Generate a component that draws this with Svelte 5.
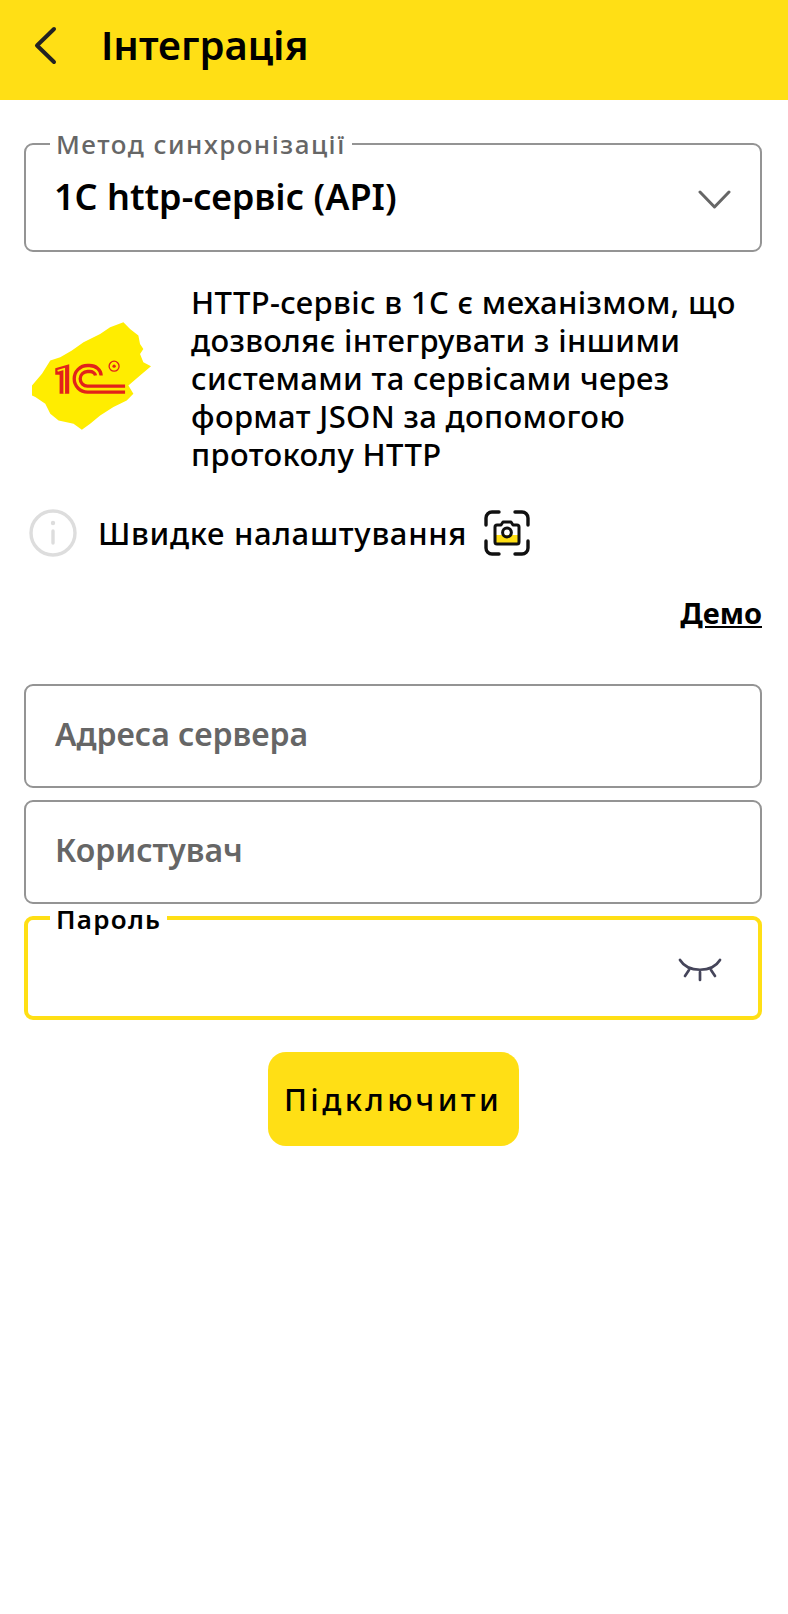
<script>
	const description = [
		'HTTP-сервіс в 1С є механізмом, що',
		'дозволяє інтегрувати з іншими',
		'системами та сервісами через',
		'формат JSON за допомогою',
		'протоколу HTTP'
	];
	const blob = 'M95 320 L125 285 L150 245 L180 235 L215 215 L250 190 L300 165 L330 145 L370 130 L390 150 L415 170 L420 195 L430 210 L420 225 L430 250 L453 262 L420 290 L385 320 L400 345 L380 365 L340 385 L300 410 L270 435 L245 453 L220 435 L175 425 L150 405 L135 375 L105 355 L95 350 Z';
</script>

<div class="page">
	<header class="topbar">
		<svg class="back" width="25" height="39" viewBox="0 0 25 39" fill="none">
			<path d="M21 3 L4 19.5 L21 36" stroke="#222" stroke-width="4" stroke-linecap="round" stroke-linejoin="round" />
		</svg>
		<h1>Інтеграція</h1>
	</header>

	<main class="content">
		<div class="field select">
			<span class="legend">Метод синхронізації</span>
			<span class="value">1C http-сервіс (API)</span>
			<svg class="chevron" width="33" height="20" viewBox="0 0 33 20" fill="none">
				<path d="M2 2 L16.5 17 L31 2" stroke="#666" stroke-width="3" stroke-linecap="round" stroke-linejoin="round" />
			</svg>
		</div>

		<section class="about">
			<svg class="logo" width="119" height="108" viewBox="95 130 358 323">
				<path fill="#ffed00" d={blob} />
				<path fill="#e2231a" d="M165 268 L207 256 V345 H178 V288 H165 Z" />
				<path fill="none" stroke="#ffed00" stroke-width="5" d="M172 276 L192 270 V345" />
				<g fill="none" stroke="#e2231a" stroke-width="10">
					<path d="M375 340 H262 A40 40 0 0 1 262 260 H268 A35 30 0 0 1 303 290" />
					<path d="M375 322 H262 A22 22 0 0 1 262 278 H268 A17 14 0 0 1 286 290" />
				</g>
				<circle cx="342" cy="262" r="15" fill="none" stroke="#e2231a" stroke-width="4" />
				<circle cx="342" cy="262" r="5" fill="#e2231a" />
			</svg>
			<p>
				{#each description as line}
					<span>{line}</span>
				{/each}
			</p>
		</section>

		<div class="quick">
			<svg class="info" width="48" height="48" viewBox="0 0 48 48" fill="none">
				<circle cx="24" cy="24" r="22" stroke="#ddd" stroke-width="3.4" />
				<path d="M24 22 V34" stroke="#ddd" stroke-width="3.4" stroke-linecap="round" />
				<circle cx="24" cy="14" r="2.2" fill="#ddd" />
			</svg>
			<span>Швидке налаштування</span>
			<svg class="scan" width="46" height="46" viewBox="0 0 46 46" fill="none">
				<path d="M2 15 V8 A6 6 0 0 1 8 2 H15 M31 2 H38 A6 6 0 0 1 44 8 V15 M44 31 V38 A6 6 0 0 1 38 44 H31 M15 44 H8 A6 6 0 0 1 2 38 V31" stroke="#111" stroke-width="3.4" stroke-linecap="round" />
				<path d="M11 25 H35 V32 A2 2 0 0 1 33 34 H13 A2 2 0 0 1 11 32 Z" fill="#ffdf15" />
				<path d="M11 32 V17 A2 2 0 0 1 13 15 H17 L19 12 H27 L29 15 H33 A2 2 0 0 1 35 17 V32 A2 2 0 0 1 33 34 H13 A2 2 0 0 1 11 32 Z" stroke="#111" stroke-width="3" stroke-linejoin="round" />
				<circle cx="23" cy="22.5" r="4.4" stroke="#111" stroke-width="3" />
			</svg>
		</div>

		<div class="demo-row"><span class="demo">Демо</span></div>

		<div class="fields">
			<div class="field input"><span class="placeholder">Адреса сервера</span></div>
			<div class="field input"><span class="placeholder">Користувач</span></div>
			<div class="field input focused">
				<span class="legend">Пароль</span>
				<svg class="eye" width="44" height="24" viewBox="0 0 44 24" fill="none">
					<path d="M2 2 C10 15 34 15 42 2 M11 12 L7 18 M22 14 V22 M33 12 L37 18" stroke="#45455a" stroke-width="2.7" stroke-linecap="round" />
				</svg>
			</div>
		</div>

		<button class="connect">Підключити</button>
	</main>
</div>

<style>
	:global(body) {
		background: #fff;
	}
	.page {
		width: 788px;
		height: 1614px;
		font-family: "Noto Sans", sans-serif;
		color: #000;
	}
	.topbar {
		display: flex;
		align-items: center;
		height: 100px;
		padding: 0 0 10px 33px;
		box-sizing: border-box;
		background: #ffdf15;
	}
	.back {
		margin-right: 43px;
	}
	h1 {
		margin: 0;
		font-size: 40px;
		font-weight: 600;
		line-height: 44px;
	}
	.content {
		display: flex;
		flex-direction: column;
		padding: 43px 26px 0 24px;
	}
	.field {
		position: relative;
		box-sizing: border-box;
		border: 2px solid #949494;
		border-radius: 9px;
	}
	.legend {
		position: absolute;
		left: 24px;
		top: -15px;
		padding: 0 6px;
		background: #fff;
		font-size: 26px;
		line-height: 28px;
		font-weight: 500;
		letter-spacing: 1.5px;
		color: #666;
	}
	.select {
		height: 109px;
		display: flex;
		justify-content: space-between;
		padding: 30px 29px 0 28px;
	}
	.value {
		font-size: 36px;
		line-height: 44px;
		font-weight: 600;
	}
	.chevron {
		margin-top: 15px;
	}
	.about {
		display: flex;
		margin-top: 31px;
	}
	.logo {
		flex: none;
		margin: 39px 40px 0 8px;
	}
	.about p {
		margin: 0;
		font-size: 31px;
		line-height: 38px;
		font-weight: 500;
		letter-spacing: 0.35px;
	}
	.about span {
		display: block;
		white-space: nowrap;
	}
	.quick {
		display: flex;
		align-items: center;
		margin: 36px 0 0 5px;
		font-size: 31px;
		font-weight: 500;
		letter-spacing: 0.7px;
	}
	.quick span {
		margin: 0 17px 0 21px;
	}
	.demo-row {
		display: flex;
		justify-content: flex-end;
		margin-top: 38px;
	}
	.demo {
		font-size: 29px;
		line-height: 36px;
		font-weight: 700;
		text-decoration: underline;
	}
	.fields {
		display: flex;
		flex-direction: column;
		gap: 12px;
		margin-top: 53px;
	}
	.input {
		height: 104px;
		display: flex;
		align-items: center;
		padding: 0 0 5px 29px;
	}
	.placeholder {
		font-size: 32px;
		font-weight: 600;
		color: #666;
	}
	.focused {
		border: 4px solid #ffdf15;
		justify-content: flex-end;
		padding: 0 36px 0 29px;
	}
	.focused .legend {
		color: #000;
		left: 22px;
		top: -15px;
		letter-spacing: 1.3px;
		font-weight: 600;
	}
	.eye {
		margin-top: 3px;
	}
	.connect {
		align-self: center;
		margin: 32px 0 0 0;
		width: 251px;
		height: 94px;
		border: none;
		border-radius: 18px;
		background: #ffdf15;
		font-family: inherit;
		font-size: 31px;
		font-weight: 500;
		letter-spacing: 3.4px;
		color: #000;
	}
</style>
